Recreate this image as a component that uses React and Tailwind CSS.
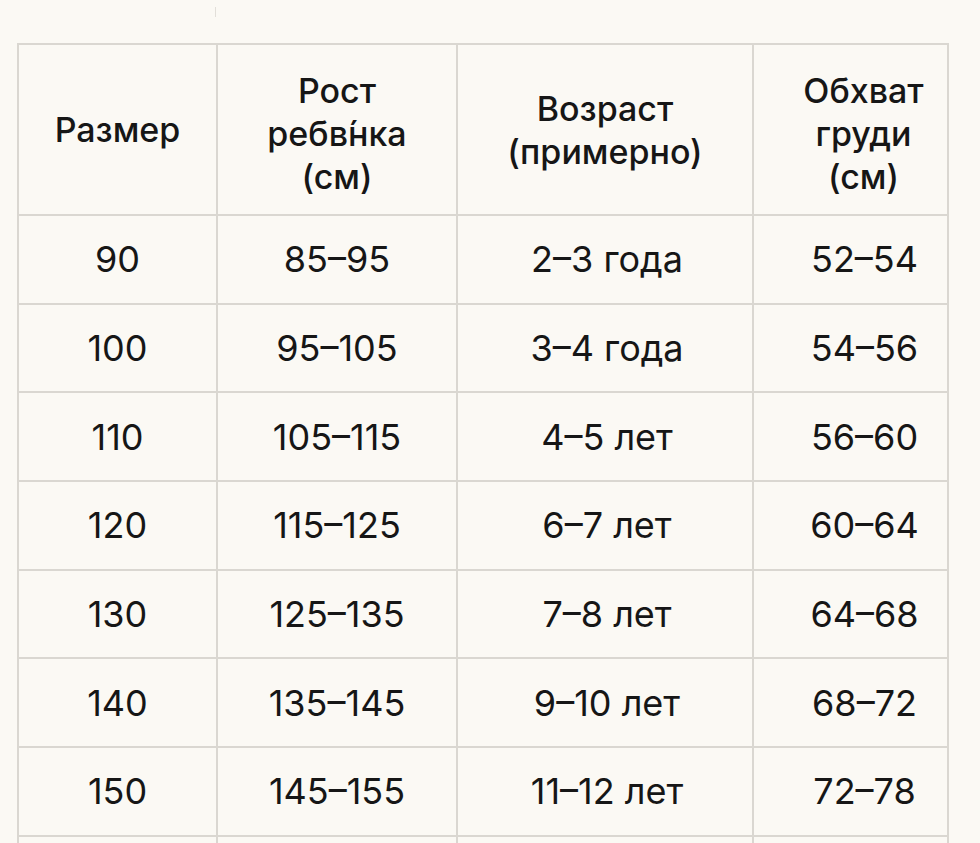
import React from 'react';

const rows = [
  ['90', '85–95', '2–3 года', '52–54'],
  ['100', '95–105', '3–4 года', '54–56'],
  ['110', '105–115', '4–5 лет', '56–60'],
  ['120', '115–125', '6–7 лет', '60–64'],
  ['130', '125–135', '7–8 лет', '64–68'],
  ['140', '135–145', '9–10 лет', '68–72'],
  ['150', '145–155', '11–12 лет', '72–78'],
];

const cell = 'border-2 border-[#dad7d1] text-center align-middle p-0';
const head = `${cell} font-medium text-[34px] leading-[43px]`;
const body = `${cell} text-[36px] font-normal`;

const App = () => {
  return (
    <div
      className="min-h-screen bg-[#fbf9f4] text-[#161616]"
      style={{ fontFamily: 'Inter, "Noto Sans", sans-serif' }}
    >
      <div className="h-[43px] pl-[215px] pt-[7px]">
        <div className="h-[10px] w-px bg-[#e2dfd9]" />
      </div>

      <table className="ml-[17px] border-collapse table-fixed w-[930px]">
        <colgroup>
          <col className="w-[199px]" />
          <col className="w-[240px]" />
          <col className="w-[296px]" />
          <col className="w-[195px]" />
        </colgroup>
        <thead>
          <tr className="h-[171px]">
            <th className={head}>Размер</th>
            <th className={`${head} pt-[8px]`}>
              Рост
              <br />
              ребв́нка
              <br />
              (см)
            </th>
            <th className={head}>
              Возраст
              <br />
              (примерно)
            </th>
            <th className={`${head} pl-[26px] pt-[8px]`}>
              Обхват
              <br />
              груди
              <br />
              (см)
            </th>
          </tr>
        </thead>
        <tbody>
          {rows.map((r, i) => (
            <tr key={i} className="h-[88.7px]">
              <td className={body}>{r[0]}</td>
              <td className={body}>{r[1]}</td>
              <td className={`${body} pl-[4px]`}>{r[2]}</td>
              <td className={`${body} pl-[28px]`}>{r[3]}</td>
            </tr>
          ))}
          <tr className="h-[88.7px]">
            <td className={body} />
            <td className={body} />
            <td className={body} />
            <td className={body} />
          </tr>
        </tbody>
      </table>
    </div>
  );
};

export default App;
